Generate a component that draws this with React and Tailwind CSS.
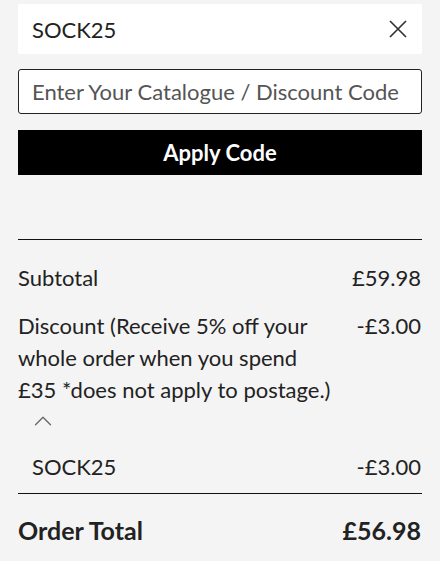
import { ChevronUp } from 'lucide-react';

export default function App() {
  return (
    <div className="min-h-[561px] bg-[#f4f4f4] px-[18px] pt-1 text-[#222] font-['Lato',sans-serif]">
      <div className="h-[50px] bg-white flex items-center justify-between pl-[14px] pr-[15px]">
        <span className="text-[22px]">SOCK25</span>
        <svg width="18" height="18" viewBox="0 0 18 18" className="text-[#333]">
          <path d="M1 1L17 17M17 1L1 17" stroke="currentColor" strokeWidth="1.7" fill="none" />
        </svg>
      </div>

      <input
        type="text"
        placeholder="Enter Your Catalogue / Discount Code"
        className="mt-[15px] w-full h-[45px] bg-white border border-[#222] rounded-[3px] px-[13px] text-[22px] placeholder:text-[#555] outline-none"
      />

      <button className="mt-[16px] w-full h-[45px] bg-black text-white text-[22px] font-bold">
        Apply Code
      </button>

      <div className="mt-[64px] border-t border-[#111]" />

      <div className="pt-[22px] flex justify-between pr-px text-[22px] leading-[32px]">
        <span>Subtotal</span>
        <span>£59.98</span>
      </div>

      <div className="mt-[16px] flex justify-between pr-px text-[22px] leading-[32px]">
        <span className="w-[320px]">
          Discount (Receive 5% off your whole order when you spend £35 *does not apply to postage.)
        </span>
        <span>-£3.00</span>
      </div>

      <div className="pl-[10px] h-[30px] flex items-center">
        <ChevronUp size={30} strokeWidth={1} className="text-[#666]" />
      </div>

      <div className="mt-[15px] pl-[14px] pr-px flex justify-between text-[22px] leading-[32px]">
        <span>SOCK25</span>
        <span>-£3.00</span>
      </div>

      <div className="mt-[10px] border-t border-[#111]" />

      <div className="pt-[20px] flex justify-between pr-px text-[25px] font-bold leading-[32px]">
        <span>Order Total</span>
        <span>£56.98</span>
      </div>
    </div>
  );
}
